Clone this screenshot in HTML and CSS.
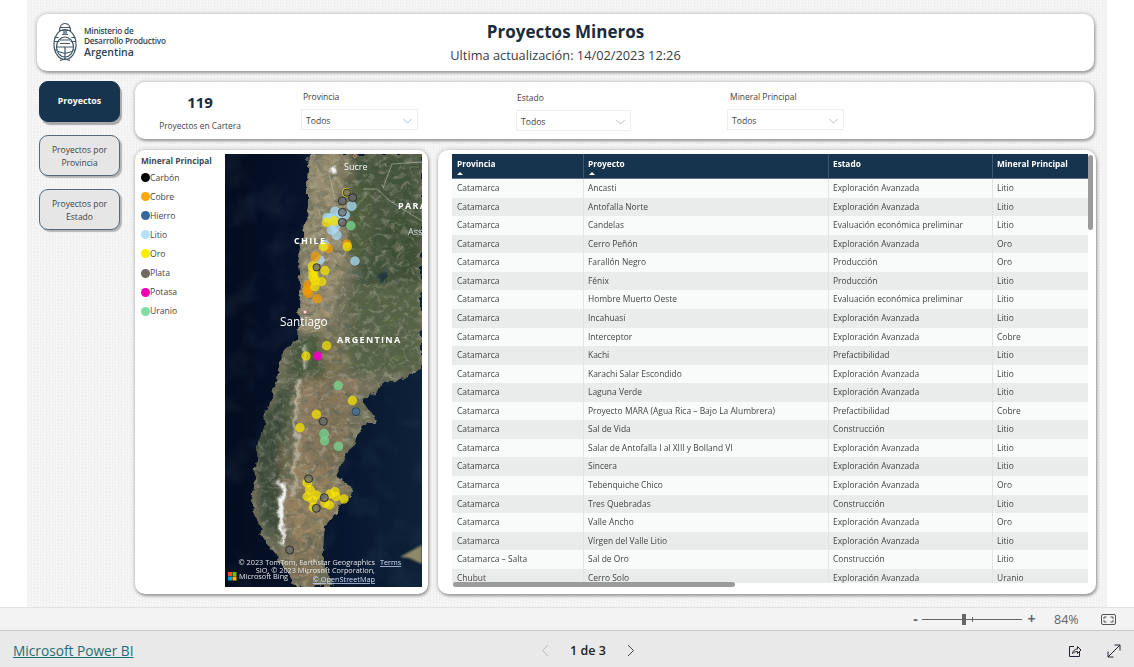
FILE: index.html
```html
<!DOCTYPE html>
<html lang="es">
<head>
<meta charset="utf-8">
<title>Proyectos Mineros</title>
<link rel="stylesheet" href="styles.css">
</head>
<body>
<main class="stage">
  <div class="canvas">
    <header class="card head">
      <div class="logo">
        <svg class="emblem" viewBox="0 0 26 41" aria-hidden="true">
          <g fill="none" stroke="#3f5666" stroke-width="1.2">
            <ellipse cx="13" cy="22.500" rx="11" ry="15"/>
            <path d="M7.500 9.500C7.500 4 10 1.500 13 1.500s5.500 2.500 5.500 8"/>
            <path d="M8 5.500h10M7.500 8.500h11"/>
            <ellipse cx="13" cy="25" rx="8.500" ry="10"/>
            <path d="M4.500 25h17M2.500 15.500h4M19.500 15.500h4M2.500 19.500h5M18.500 19.500h5M2.500 28h3M20.500 28h3"/>
            <path d="M6 29.500l7 2 7-2M10 12.500h6M8 18h10M8 21.500h10M13 25v12"/>
            <path d="M8 38.500l5-1.500 5 1.500"/>
          </g>
          <circle cx="13" cy="10.500" r="2.200" fill="#7e909c"/>
        </svg>
        <div class="logo-text">
          <span>Ministerio de</span>
          <span>Desarrollo Productivo</span>
          <strong>Argentina</strong>
        </div>
      </div>
      <h1>Proyectos Mineros</h1>
      <p class="updated">Ultima actualización: 14/02/2023 12:26</p>
    </header>

    <div class="body-row">
      <nav class="nav">
        <a class="nav-btn active">Proyectos</a>
        <a class="nav-btn">Proyectos por<br>Provincia</a>
        <a class="nav-btn">Proyectos por<br>Estado</a>
      </nav>

      <div class="content">
        <section class="card filters">
          <div class="kpi">
            <strong>119</strong>
            <span>Proyectos en Cartera</span>
          </div>
          <div class="slicer s-prov">
            <label>Provincia</label>
            <div class="drop"><span>Todos</span><svg viewBox="0 0 12 7"><path d="M1 1l5 5 5-5" class="chev-blue"/></svg></div>
          </div>
          <div class="slicer s-estado">
            <label>Estado</label>
            <div class="drop"><span>Todos</span><svg viewBox="0 0 12 7"><path d="M1 1l5 5 5-5"/></svg></div>
          </div>
          <div class="slicer s-mineral">
            <label>Mineral Principal</label>
            <div class="drop"><span>Todos</span><svg viewBox="0 0 12 7"><path d="M1 1l5 5 5-5"/></svg></div>
          </div>
        </section>

        <div class="lower">
          <section class="card map-card">
            <div class="legend">
              <h2>Mineral Principal</h2>
              <ul>
                <li><i class="c-carbon"></i>Carbón</li>
                <li><i class="c-cobre"></i>Cobre</li>
                <li><i class="c-hierro"></i>Hierro</li>
                <li><i class="c-litio"></i>Litio</li>
                <li><i class="c-oro"></i>Oro</li>
                <li><i class="c-plata"></i>Plata</li>
                <li><i class="c-potasa"></i>Potasa</li>
                <li><i class="c-uranio"></i>Uranio</li>
              </ul>
            </div>
            <div class="map">
              <svg class="map-svg" viewBox="0 0 197 433" aria-hidden="true">
                <defs>
                  <clipPath id="land"><path d="M85 0L83 29 83 53 77 86 73 106 75 129 73 153 75 169 72 186 58 199 52 216 51 226 42 259 33 289 26 349 40 389 58 413 70 433 110 433 97 403 100 373 125 343 129 333 112 323 117 306 137 274 150 266 137 246 160 229 197 216V0Z"/></clipPath>
                  <linearGradient id="oceanG" x1="0" x2="1" y1="0" y2="0"><stop offset="0" stop-color="#040c1e"/><stop offset=".6" stop-color="#071630"/><stop offset="1" stop-color="#0d2137"/></linearGradient>
                  <filter id="soft" x="-30%" y="-30%" width="160%" height="160%"><feGaussianBlur stdDeviation="3.500"/></filter>
                  <filter id="soft2" x="-30%" y="-30%" width="160%" height="160%"><feGaussianBlur stdDeviation=".8"/></filter>
                  <filter id="dotblur" x="-5%" y="-5%" width="110%" height="110%"><feGaussianBlur stdDeviation=".3"/></filter>
                  <filter id="rough" x="0" y="0" width="100%" height="100%"><feTurbulence type="fractalNoise" baseFrequency=".09" numOctaves="3" seed="7" result="t"/><feDisplacementMap in="SourceGraphic" in2="t" scale="11" xChannelSelector="R" yChannelSelector="G"/><feGaussianBlur stdDeviation=".35"/></filter>
                  <filter id="noiseD" x="0" y="0" width="100%" height="100%"><feTurbulence type="fractalNoise" baseFrequency=".1 .16" numOctaves="4" seed="4"/><feColorMatrix values="0 0 0 0 .1  0 0 0 0 .12  0 0 0 0 .08  2.600 0 0 0 -1.050"/></filter>
                  <filter id="noiseL" x="0" y="0" width="100%" height="100%"><feTurbulence type="fractalNoise" baseFrequency=".14 .2" numOctaves="3" seed="21"/><feColorMatrix values="0 0 0 0 .78  0 0 0 0 .72  0 0 0 0 .6  2.400 0 0 0 -1.150"/></filter>
                  <filter id="noiseS" x="0" y="0" width="100%" height="100%"><feTurbulence type="fractalNoise" baseFrequency=".03" numOctaves="3" seed="11"/><feColorMatrix values="0 0 0 0 .2  0 0 0 0 .33  0 0 0 0 .45  2 0 0 0 -.95"/></filter>
                </defs>
                <rect width="197" height="433" fill="url(#oceanG)"/>
                <rect width="197" height="433" filter="url(#noiseS)" opacity=".13"/>
                <g filter="url(#rough)">
                  <g clip-path="url(#land)">
                    <rect width="197" height="433" fill="#72715a"/>
                    <g filter="url(#soft)">
                      <path d="M128 0H197V216H140L125 160 137 70Z" fill="#43533a"/>
                      <path d="M82 0H120L126 90 106 170 90 190H72Z" fill="#988d70"/>
                      <path d="M130 130H197V220H120Z" fill="#566344"/>
                      <path d="M160 60H197V130H170Z" fill="#3e4f36"/>
                      <path d="M120 20L150 40 140 110 122 100Z" fill="#4d5d3b"/>
                      <path d="M72 180H118L108 216 70 260Z" fill="#4a5a3b"/>
                      <path d="M110 170L125 215 100 224 96 190Z" fill="#7d7556"/>
                      <path d="M78 225H140L100 300 70 340 95 420H65L45 340 50 270Z" fill="#8f7b60"/>
                      <path d="M92 230L130 240 118 300 95 340 85 300Z" fill="#85755a"/>
                      <path d="M28 285L60 228 70 228 56 300 58 392 36 370Z" fill="#3a4a39"/>
                      <path d="M60 240H70L66 320 60 330Z" fill="#536047"/>
                      <path d="M70 305L112 325 127 340 97 375 92 430H70L66 350Z" fill="#93805f"/>
                      <path d="M64 385H96L92 433H70Z" fill="#84745a"/>
                      <path d="M68 188L80 185 76 220H64Z" fill="#435339"/>
                    </g>
                    <rect width="197" height="433" filter="url(#noiseD)" opacity=".65"/>
                    <rect width="197" height="433" filter="url(#noiseL)" opacity=".38"/>
                    <g filter="url(#soft2)">
                      <path d="M53 326L56 332 53 352 56 385 54 392 59 388 60 350 61 330Z" fill="#f1f3f1"/>
                      <path d="M73 225L70 262 71 300 66 340 68 342 73 300 72 262 76 225Z" fill="#d4d7c8" opacity=".8"/>
                      <path d="M80 192L78 218 80 218 82 192Z" fill="#d5d7c8"/>
                      <ellipse cx="108" cy="15" rx="5" ry="3.500" fill="#f7f7f7"/>
                      <ellipse cx="157" cy="124" rx="5" ry="4" fill="#20383c"/>
                      <ellipse cx="132" cy="118" rx="8" ry="2" fill="#59685f" opacity=".7"/>
                    </g>
                  </g>
                </g>
                <path d="M175 403L197 391V410L184 404Z" fill="#8e8a68" filter="url(#soft2)"/>
                <g fill="none" stroke="#b9bdae" stroke-width=".8" opacity=".75">
                  <path d="M138 35H152L165 47 197 67"/>
                  <path d="M158 34L167 10 197 8"/>
                  <path d="M104 20L110 45"/>
                </g>

                <g filter="url(#dotblur)">
                <g transform="translate(-5 -4) scale(.33333)">
                  <g class="d litio">
                    <circle cx="395" cy="168" r="14"/><circle cx="345" cy="185" r="14"/><circle cx="365" cy="190" r="14"/><circle cx="330" cy="205" r="14"/><circle cx="355" cy="205" r="14"/><circle cx="375" cy="195" r="14"/><circle cx="322" cy="203" r="14"/><circle cx="335" cy="240" r="14"/><circle cx="350" cy="255" r="14"/><circle cx="345" cy="230" r="14"/><circle cx="315" cy="285" r="14"/><circle cx="300" cy="330" r="13"/><circle cx="405" cy="333" r="13"/>
                  </g>
                  <g class="d cobre">
                    <circle cx="325" cy="295" r="13"/><circle cx="287" cy="320" r="14"/><circle cx="265" cy="405" r="14"/><circle cx="262" cy="420" r="14"/><circle cx="265" cy="430" r="14"/><circle cx="292" cy="446" r="13"/><circle cx="381" cy="282" r="13"/>
                  </g>
                  <g class="d oro">
                    <circle cx="320" cy="217" r="13"/><circle cx="342" cy="213" r="14"/><circle cx="310" cy="290" r="13"/><circle cx="382" cy="290" r="13"/><circle cx="280" cy="350" r="16"/><circle cx="280" cy="365" r="14"/><circle cx="280" cy="380" r="14"/><circle cx="315" cy="362" r="13"/><circle cx="285" cy="390" r="14"/><circle cx="305" cy="395" r="13"/><circle cx="285" cy="410" r="13"/><circle cx="320" cy="587" r="13"/><circle cx="258" cy="618" r="13"/><circle cx="380" cy="128" r="13"/>
                  </g>
                  <g class="d plata">
                    <circle cx="381" cy="128" r="11"/><circle cx="398" cy="143" r="12"/><circle cx="367" cy="153" r="12"/><circle cx="367" cy="187" r="12"/><circle cx="367" cy="217" r="12"/><circle cx="290" cy="352" r="11"/>
                  </g>
                  <circle class="d uranio" cx="393" cy="227" r="13"/>
                  <circle class="d potasa" cx="293" cy="618" r="13"/>
                </g>
                <g transform="translate(-5 216) scale(.33333)">
                  <g class="d uranio">
                    <circle cx="355" cy="47" r="13"/><circle cx="312" cy="192" r="14"/><circle cx="314" cy="213" r="13"/><circle cx="355" cy="229" r="13"/>
                  </g>
                  <g class="d oro">
                    <circle cx="397" cy="92" r="13"/><circle cx="289" cy="133" r="13"/><circle cx="240" cy="173" r="13"/><circle cx="262" cy="338" r="14"/><circle cx="270" cy="360" r="14"/><circle cx="262" cy="380" r="13"/><circle cx="290" cy="375" r="13"/><circle cx="278" cy="390" r="13"/><circle cx="345" cy="365" r="13"/><circle cx="330" cy="372" r="13"/><circle cx="372" cy="387" r="13"/><circle cx="315" cy="400" r="13"/><circle cx="328" cy="405" r="13"/><circle cx="348" cy="380" r="13"/><circle cx="280" cy="412" r="13"/>
                  </g>
                  <circle class="d hierro" cx="408" cy="125" r="12"/>
                  <g class="d plata">
                    <circle cx="310" cy="154" r="12"/><circle cx="266" cy="326" r="12"/><circle cx="313" cy="383" r="12"/><circle cx="289" cy="415" r="12"/><circle cx="209" cy="540" r="12"/>
                  </g>
                </g>
                </g>

                <circle cx="130" cy="2" r="1.500" fill="none" stroke="#e88" stroke-width=".8"/>
                <circle cx="80" cy="158" r="1.500" fill="#fff" stroke="#e66" stroke-width=".6"/>
                <text class="place" x="119" y="16">Sucre</text>
                <text class="region" x="173" y="55">PARA</text>
                <text class="place small" x="183" y="81">Ass</text>
                <text class="region" x="69" y="90">CHILE</text>
                <text class="place city" x="55" y="172">Santiago</text>
                <text class="region" x="112" y="189">ARGENTINA</text>
                <g class="attrib">
                  <text x="150" y="411" text-anchor="end">© 2023 TomTom, Earthstar Geographics</text>
                  <text class="lnk" x="155" y="411">Terms</text>
                  <text x="150" y="419" text-anchor="end">SIO, © 2023 Microsoft Corporation,</text>
                  <text class="lnk" x="150" y="428" text-anchor="end">© OpenStreetMap</text>
                  <text x="14" y="424.500">Microsoft Bing</text>
                </g>
                <g>
                  <rect x="3" y="418" width="4" height="4" fill="#f25022"/>
                  <rect x="7.500" y="418" width="4" height="4" fill="#7fba00"/>
                  <rect x="3" y="422.500" width="4" height="4" fill="#00a4ef"/>
                  <rect x="7.500" y="422.500" width="4" height="4" fill="#ffb900"/>
                </g>
              </svg>
            </div>
          </section>

          <section class="card table-card">
            <div class="table">
              <div class="row th">
                <div>Provincia<em></em></div>
                <div>Proyecto<em></em></div>
                <div>Estado</div>
                <div>Mineral Principal</div>
              </div>
              <div class="row"><div>Catamarca</div><div>Ancasti</div><div>Exploración Avanzada</div><div>Litio</div></div>
              <div class="row"><div>Catamarca</div><div>Antofalla Norte</div><div>Exploración Avanzada</div><div>Litio</div></div>
              <div class="row"><div>Catamarca</div><div>Candelas</div><div>Evaluación económica preliminar</div><div>Litio</div></div>
              <div class="row"><div>Catamarca</div><div>Cerro Peñón</div><div>Exploración Avanzada</div><div>Oro</div></div>
              <div class="row"><div>Catamarca</div><div>Farallón Negro</div><div>Producción</div><div>Oro</div></div>
              <div class="row"><div>Catamarca</div><div>Fénix</div><div>Producción</div><div>Litio</div></div>
              <div class="row"><div>Catamarca</div><div>Hombre Muerto Oeste</div><div>Evaluación económica preliminar</div><div>Litio</div></div>
              <div class="row"><div>Catamarca</div><div>Incahuasi</div><div>Exploración Avanzada</div><div>Litio</div></div>
              <div class="row"><div>Catamarca</div><div>Interceptor</div><div>Exploración Avanzada</div><div>Cobre</div></div>
              <div class="row"><div>Catamarca</div><div>Kachi</div><div>Prefactibilidad</div><div>Litio</div></div>
              <div class="row"><div>Catamarca</div><div>Karachi Salar Escondido</div><div>Exploración Avanzada</div><div>Litio</div></div>
              <div class="row"><div>Catamarca</div><div>Laguna Verde</div><div>Exploración Avanzada</div><div>Litio</div></div>
              <div class="row"><div>Catamarca</div><div>Proyecto MARA (Agua Rica – Bajo La Alumbrera)</div><div>Prefactibilidad</div><div>Cobre</div></div>
              <div class="row"><div>Catamarca</div><div>Sal de Vida</div><div>Construcción</div><div>Litio</div></div>
              <div class="row"><div>Catamarca</div><div>Salar de Antofalla I al XIII y Bolland VI</div><div>Exploración Avanzada</div><div>Litio</div></div>
              <div class="row"><div>Catamarca</div><div>Sincera</div><div>Exploración Avanzada</div><div>Litio</div></div>
              <div class="row"><div>Catamarca</div><div>Tebenquiche Chico</div><div>Exploración Avanzada</div><div>Oro</div></div>
              <div class="row"><div>Catamarca</div><div>Tres Quebradas</div><div>Construcción</div><div>Litio</div></div>
              <div class="row"><div>Catamarca</div><div>Valle Ancho</div><div>Exploración Avanzada</div><div>Oro</div></div>
              <div class="row"><div>Catamarca</div><div>Vírgen del Valle Litio</div><div>Exploración Avanzada</div><div>Litio</div></div>
              <div class="row"><div>Catamarca – Salta</div><div>Sal de Oro</div><div>Construcción</div><div>Litio</div></div>
              <div class="row"><div>Chubut</div><div>Cerro Solo</div><div>Exploración Avanzada</div><div>Uranio</div></div>
            </div>
            <div class="vbar"></div>
            <div class="hbar"></div>
          </section>
        </div>
      </div>
    </div>
  </div>
</main>

<div class="zoombar">
  <span class="z-sign z-minus">-</span>
  <div class="slider"><b></b><u></u></div>
  <span class="z-sign">+</span>
  <span class="z-pct">84%</span>
  <svg class="z-fit" viewBox="0 0 15 11" aria-hidden="true"><rect x=".5" y=".5" width="14" height="10" rx="1.500"/><path d="M3 5V3h2.500M12 5V3H9.500M3 6v2h2.500M12 6v2H9.500"/></svg>
</div>

<footer class="footer">
  <a class="brand">Microsoft Power BI</a>
  <div class="pager">
    <svg class="off" viewBox="0 0 8 13" aria-hidden="true"><path d="M7 1L1.500 6.500 7 12"/></svg>
    <span>1 de 3</span>
    <svg viewBox="0 0 8 13" aria-hidden="true"><path d="M1 1l5.500 5.500L1 12"/></svg>
  </div>
  <div class="foot-icons">
    <svg viewBox="0 0 14 14" aria-hidden="true"><path d="M6 2.500H1.500v10h10V8"/><path d="M4.500 9.500C5 6.500 7 5 9.500 5V2.500L13 6 9.500 9.500V7.500C7.500 7.500 6 8 4.500 9.500Z"/></svg>
    <svg viewBox="0 0 14 14" aria-hidden="true"><path d="M1 13L13 1M7.500 1H13v5.500M1 7.500V13h5.500"/></svg>
  </div>
</footer>
</body>
</html>
```

FILE: styles.css
```css
* { box-sizing: border-box; }
html, body { margin: 0; height: 667px; overflow: hidden; background: #fff; }
body { display: flex; flex-direction: column; font-family: "Open Sans", "Noto Sans", sans-serif; color: #333; }

.stage { height: 607px; padding-left: 27px; background: #fff; flex: none; }
.canvas {
  width: 1080px; height: 607px; padding: 14px 13px 0 10px;
  background-color: #f4f4f4;
  background-image: repeating-conic-gradient(#f0f0f0 0 25%, #f7f7f7 0 50%);
  background-size: 3px 3px;
}
.card { background: #fff; border-radius: 10px; box-shadow: 1px 2px 3px #9d9d9d, 0 0 4px #b5b5b5; }

.head { position: relative; height: 57px; text-align: center; }
.head h1 { margin: 0; padding-top: 6px; font-size: 17px; line-height: 23px; font-weight: 700; color: #1b2b3a; }
.updated { margin: 4px 0 0; font-size: 12.800px; line-height: 17px; color: #3b3b3b; }
.logo { position: absolute; left: 15px; top: 8px; display: flex; gap: 6px; align-items: center; }
.emblem { width: 26px; height: 41px; }
.logo-text { display: flex; flex-direction: column; font-size: 8.200px; line-height: 9.500px; font-weight: 600; color: #2f4252; letter-spacing: -.2px; text-align: left; }
.logo-text strong { font-size: 10.500px; line-height: 14px; font-weight: 600; letter-spacing: 0; }

.body-row { display: flex; margin-top: 11px; }
.nav { width: 98px; padding-left: 2px; display: flex; flex-direction: column; gap: 13px; flex: none; margin-top: -1px; }
.nav-btn {
  width: 81px; height: 41px; padding-top: 1px; display: flex; align-items: center; justify-content: center; text-align: center;
  font-size: 8.500px; line-height: 13px; color: #444;
  background: #e6e6e6; border: 1px solid #56697a; border-radius: 9px; box-shadow: 2px 2px 1px #b5b5b5;
}
.nav-btn.active { padding-top: 0; font-size: 8.800px; background: #17344f; border-color: #17344f; color: #fff; font-weight: 700; box-shadow: 2px 3px 1px #a9a9a9; }

.content { width: 961px; flex: none; }
.filters { height: 57px; width: 959px; display: flex; }
.kpi { width: 130px; display: flex; flex-direction: column; align-items: center; flex: none; }
.kpi strong { margin-top: 10px; font-size: 15px; line-height: 21px; color: #1b2b3a; }
.kpi span { margin-top: 6px; font-size: 8.400px; line-height: 13px; color: #444; }
.slicer { width: 117px; flex: none; display: flex; flex-direction: column; }
.slicer label { font-size: 8.500px; line-height: 12px; color: #444; padding-left: 2px; margin-top: 9px; }
.s-prov { margin-left: 36px; }
.s-estado { margin-left: 98px; width: 115px; padding-top: 1px; }
.s-estado label { padding-left: 1px; }
.s-mineral { margin-left: 96px; }
.s-mineral label { padding-left: 3px; }
.drop { margin-top: 6px; height: 21px; padding: 2px 4px 0 4px; border: 1px solid #eee; display: flex; align-items: center; justify-content: space-between; font-size: 8.600px; color: #444; }
.drop svg { width: 11px; height: 6px; fill: none; }
.drop path { stroke: #b4b4b4; stroke-width: 1; }
.drop path.chev-blue { stroke: #8cc0dc; }

.lower { display: flex; gap: 10px; margin-top: 11px; }
.map-card { width: 293px; height: 444px; display: flex; padding: 4px 6px 7px 6px; }
.legend { width: 84px; flex: none; font-size: 8.600px; color: #444; }
.legend h2 { margin: 0; font-size: 8.300px; line-height: 13px; font-weight: 700; color: #3a4a58; }
.legend ul { list-style: none; margin: 1px 0 0; padding: 0; }
.legend li { display: flex; align-items: center; height: 19.100px; }
.legend i { width: 9px; height: 9px; border-radius: 50%; }
.c-carbon { background: #000; }
.c-cobre { background: #f6a800; }
.c-hierro { background: #33699b; }
.c-litio { background: #b4e0f8; }
.c-oro { background: #f9ed00; }
.c-plata { background: #6b6b63; }
.c-potasa { background: #ee00bb; }
.c-uranio { background: #83dc9f; }

.map { width: 197px; height: 433px; flex: none; }
.map-svg { display: block; width: 197px; height: 433px; }
.d circle, circle.d { fill-opacity: .72; stroke-width: 1.500; }
.litio circle { fill: #a7dcf8; stroke: #a7dcf8; }
.cobre circle { fill: #f49b00; stroke: #f49b00; }
.oro circle { fill: #f7e300; stroke: #f7e300; }
.plata circle { fill: #666a6e; stroke: #222; fill-opacity: .75; stroke-width: 2.500; }
.uranio, .uranio circle { fill: #74d892; stroke: #74d892; }
.potasa { fill: #f000c0; stroke: #f000c0; fill-opacity: .95 !important; }
.hierro { fill: #33699b; stroke: #123; }
.map-svg text { font-family: "Open Sans", sans-serif; fill: #fff; }
.region { font-size: 9px; font-weight: 700; letter-spacing: 1.300px; fill: #f3f3f3; }
.place { font-size: 9px; }
.place.small { font-size: 9px; fill: #ddd !important; }
.place.city { font-size: 11.800px; }
.attrib text { font-size: 7.300px; fill: #e4e4e4; }
.attrib text.lnk { fill: #cfdcff; text-decoration: underline; }

.table-card { position: relative; width: 658px; height: 444px; padding: 4px 0 0 14px; overflow: hidden; }
.table { width: 636px; height: 429px; overflow: hidden; }
.row { display: grid; grid-template-columns: 131px 245px 164px 92px 4px; height: 18.570px; align-items: stretch; font-size: 8.450px; color: #444; }
.row > div { padding: 0 0 0 5px; line-height: 18px; white-space: nowrap; overflow: hidden; }
.row > div + div { border-left: 1px solid #e2e5e3; padding-left: 4px; }
.row:nth-child(even) { background: #f9fbfa; }
.row:nth-child(odd) { background: #e9ecea; }
.row.th { height: 25px; background: #17344f; color: #fff; font-weight: 700; font-size: 8.300px; border-bottom: 1px solid #5c7488; }
.row.th > div { line-height: 20px; position: relative; border-left-color: #3c5870; }
.row.th em { position: absolute; left: 5px; top: 18px; width: 0; height: 0; border: 3px solid transparent; border-top: 0; border-bottom: 3px solid #fff; }
.vbar { position: absolute; right: 3px; top: 5px; width: 5px; height: 75px; border-radius: 3px; background: #9b9b9b; }
.hbar { position: absolute; left: 15px; top: 432px; width: 282px; height: 5px; border-radius: 3px; background: #9b9b9b; }

.zoombar { flex: none; height: 24px; background: #f3f3f3; border-top: 1px solid #e2e2e2; border-bottom: 1px solid #c9c9c9; position: relative; display: flex; align-items: center; padding-left: 912px; color: #666; }
.z-sign { font-size: 14px; width: 9px; text-align: center; line-height: 1; font-weight: 700; color: #666; }
.z-minus { width: 7px; }
.slider { position: relative; width: 100px; height: 1px; margin: 0 5px 0 3px; background: #666; }
.slider b { position: absolute; left: 40px; top: -5px; width: 4px; height: 11px; background: #666; }
.slider u { position: absolute; left: 50px; top: -2px; width: 1px; height: 5px; background: #666; }
.z-pct { margin-left: 18px; font-size: 12.500px; color: #666; width: 33px; }
.z-fit { width: 15px; height: 11px; margin-left: 14px; fill: none; stroke: #555; stroke-width: 1; }

.footer { flex: none; height: 36px; padding: 3px 0 0 13px; background: #e9e9e9; position: relative; display: flex; align-items: center; }
.brand { font-size: 13.700px; color: #1c6f78; text-decoration: underline; }
.pager { position: absolute; left: 541px; top: 1px; height: 36px; display: flex; align-items: center; gap: 20px; font-size: 12.500px; font-weight: 600; color: #222; }
.pager svg { width: 8px; height: 13px; fill: none; stroke: #444; stroke-width: 1; }
.pager svg.off { stroke: #bbb; }
.pager span { width: 38px; text-align: center; white-space: nowrap; }
.foot-icons { position: absolute; left: 1068px; top: 13px; display: flex; gap: 25px; }
.foot-icons svg { width: 14px; height: 14px; fill: none; stroke: #2a2230; stroke-width: 1; }
```
